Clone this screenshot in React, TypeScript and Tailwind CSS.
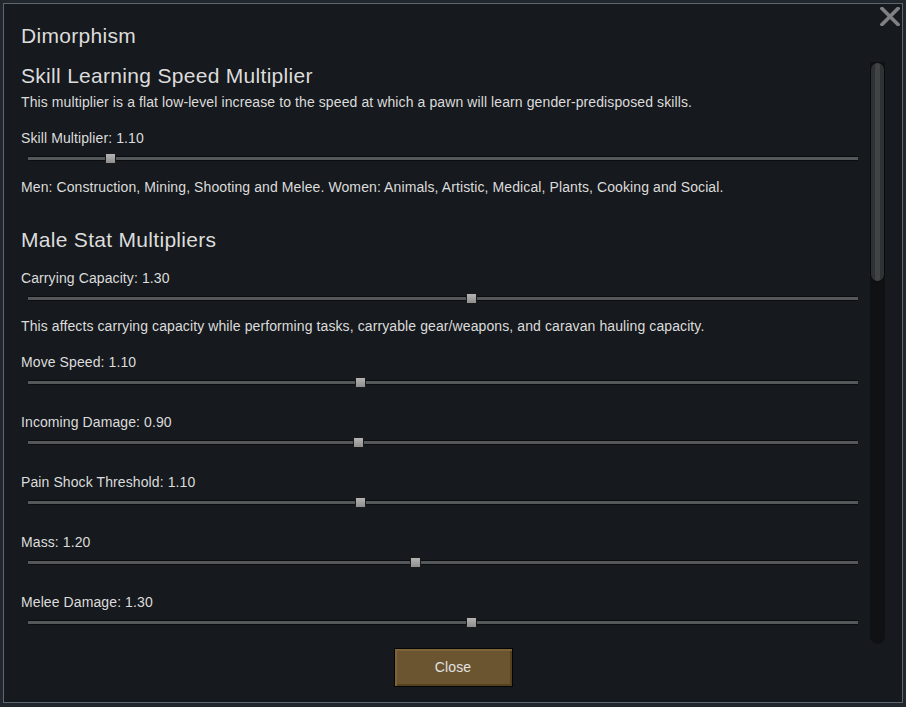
import React from "react";

type Stat = { label: string; pos: number; note?: string };

// thumb offsets in px from the start of an 830px track
const stats: Stat[] = [
  {
    label: "Carrying Capacity: 1.30",
    pos: 443,
    note: "This affects carrying capacity while performing tasks, carryable gear/weapons, and caravan hauling capacity.",
  },
  { label: "Move Speed: 1.10", pos: 332 },
  { label: "Incoming Damage: 0.90", pos: 330 },
  { label: "Pain Shock Threshold: 1.10", pos: 332 },
  { label: "Mass: 1.20", pos: 387 },
  { label: "Melee Damage: 1.30", pos: 443 },
];

const body = "text-[14px] leading-[20px] tracking-[0.1px]";
const heading = "text-[21px] leading-[28px] tracking-[0.3px]";

function Slider({ pos }: { pos: number }) {
  return (
    <div className="relative h-[20px] mx-[7px] flex items-center">
      <div className="w-full h-[5px] rounded-[1px] bg-[#55585a] border-t border-b border-[#0b0c0d]" />
      <div
        className="absolute top-[5px] w-[11px] h-[11px] border border-[#1a1a1a] bg-gradient-to-b from-[#b4b4b4] to-[#8e8e8e]"
        style={{ left: pos - 5 }}
      />
    </div>
  );
}

function CloseIcon() {
  return (
    <svg width="20" height="19" viewBox="0 0 20 19" className="block">
      <path d="M2 1.5 L18 17.5 M18 1.5 L2 17.5" stroke="#7f8083" strokeWidth="3.6" strokeLinecap="square" />
    </svg>
  );
}

export default function App() {
  return (
    <div
      className="w-[906px] h-[707px] bg-[#22272e] pt-[3px] pl-[3px] pr-[3px] pb-[4px] text-[#dcdcdc]"
      style={{ fontFamily: '"Liberation Sans", Arial, sans-serif' }}
    >
      <div className="relative w-full h-full border border-[#5d6772] bg-[#16191d] flex flex-col">
        <button className="absolute top-[3px] right-[2px] p-0">
          <CloseIcon />
        </button>

        <div className="pl-[17px] pt-[18px] h-[58px]">
          <h1 className={heading}>Dimorphism</h1>
        </div>

        <div className="flex h-[582px] pl-[17px]">
          <div className="flex-1 mr-[5px] overflow-hidden">
            <h2 className={heading}>Skill Learning Speed Multiplier</h2>
            <p className="text-[14px] leading-[24px] tracking-[0.1px]">
              This multiplier is a flat low-level increase to the speed at which a pawn will learn gender-predisposed skills.
            </p>
            <p className={`mt-[14px] ${body}`}>Skill Multiplier: 1.10</p>
            <Slider pos={82} />
            <p className={`mt-[9px] ${body}`}>
              Men: Construction, Mining, Shooting and Melee. Women: Animals, Artistic, Medical, Plants, Cooking and Social.
            </p>

            <h2 className={`mt-[29px] ${heading}`}>Male Stat Multipliers</h2>
            <div className="mt-[14px] flex flex-col">
              {stats.map((s, i) => (
                <div key={s.label} className={i === 0 ? "" : i === 1 ? "mt-[16px]" : "mt-[20px]"}>
                  <p className={body}>{s.label}</p>
                  <Slider pos={s.pos} />
                  {s.note && <p className={`mt-[8px] ${body}`}>{s.note}</p>}
                </div>
              ))}
            </div>
          </div>

          {/* scrollbar */}
          <div className="w-[15px] mr-[17px] h-full rounded-b-[8px] bg-[#0f1114]">
            <div className="h-[220px] rounded-full border border-[#08090a] bg-[#2f3235] flex justify-center">
              <div className="w-[5px] h-full bg-[#414447] rounded-full" />
            </div>
          </div>
        </div>

        <div className="flex-1 flex justify-center pt-[4px]">
          <button className="w-[119px] h-[39px] border border-[#050505] bg-[#6b5530] text-[14px] tracking-[0.1px] text-[#e2e2e2] shadow-[inset_2px_2px_0_#7d6438,inset_-2px_-2px_0_#54421f]">
            Close
          </button>
        </div>
      </div>
    </div>
  );
}
